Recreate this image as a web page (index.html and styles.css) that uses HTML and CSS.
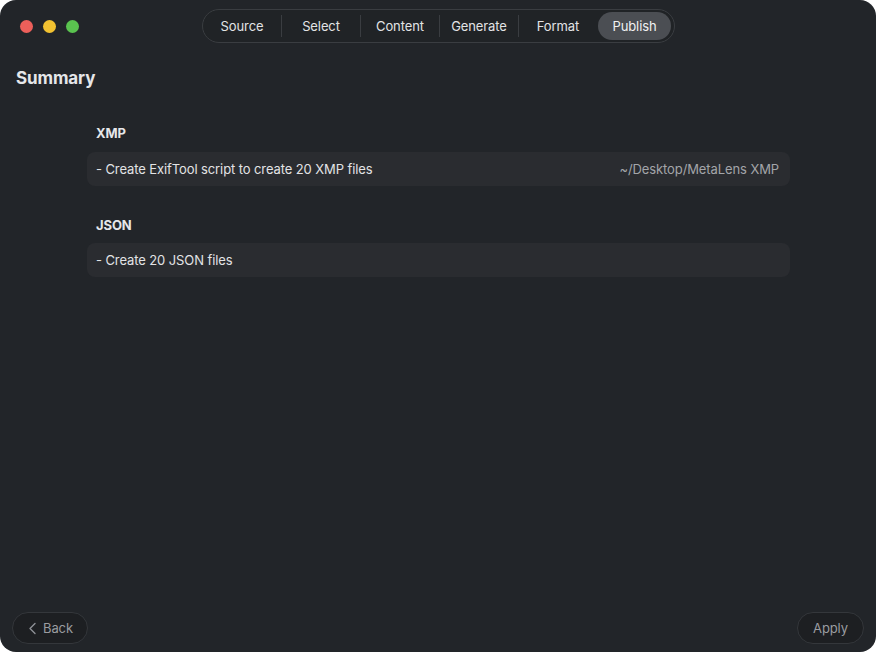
FILE: index.html
```html
<!DOCTYPE html>
<html>
<head>
<meta charset="utf-8">
<link rel="stylesheet" href="styles.css">
</head>
<body>
<div class="window">
  <header class="titlebar">
    <div class="lights">
      <span class="light red"></span>
      <span class="light yellow"></span>
      <span class="light green"></span>
    </div>
    <nav class="segments">
      <span class="seg">Source</span>
      <span class="div"></span>
      <span class="seg">Select</span>
      <span class="div"></span>
      <span class="seg">Content</span>
      <span class="div"></span>
      <span class="seg">Generate</span>
      <span class="div"></span>
      <span class="seg">Format</span>
      <span class="seg active">Publish</span>
    </nav>
  </header>
  <main class="content">
    <h1 class="title">Summary</h1>
    <section class="group">
      <h2 class="group-title">XMP</h2>
      <div class="row"><span>- Create ExifTool script to create 20 XMP files</span><span class="path">~/Desktop/MetaLens XMP</span></div>
    </section>
    <section class="group">
      <h2 class="group-title">JSON</h2>
      <div class="row"><span>- Create 20 JSON files</span></div>
    </section>
  </main>
  <footer class="footer">
    <button class="btn back"><svg width="9" height="13" viewBox="0 0 9 13"><path d="M7 1.5 L2 6.5 L7 11.5" fill="none" stroke="#8e9196" stroke-width="1.4" stroke-linecap="round" stroke-linejoin="round"/></svg>Back</button>
    <button class="btn apply">Apply</button>
  </footer>
</div>
</body>
</html>
```
FILE: styles.css
```css
html, body {
  margin: 0;
  padding: 0;
  background: #ffffff;
}
body {
  width: 876px;
  height: 652px;
  font-family: Inter, "Liberation Sans", sans-serif;
  -webkit-font-smoothing: antialiased;
  letter-spacing: -0.1px;
}
.window {
  width: 876px;
  height: 652px;
  box-sizing: border-box;
  background: #222529;
  border-radius: 16px;
  display: flex;
  flex-direction: column;
  overflow: hidden;
  color: #e4e5e7;
}
.titlebar {
  height: 52px;
  flex: none;
  position: relative;
  display: flex;
  align-items: flex-start;
}
.lights {
  display: flex;
  gap: 10px;
  padding: 20px 0 0 20px;
}
.light {
  width: 13px;
  height: 13px;
  border-radius: 50%;
  display: block;
}
.red { background: #ec5f5a; }
.yellow { background: #f2c231; }
.green { background: #5ac34f; }
.segments {
  position: absolute;
  left: 202px;
  top: 9px;
  width: 473px;
  height: 34px;
  box-sizing: border-box;
  border: 1px solid #3a3d41;
  border-radius: 17px;
  background: #202326;
  display: flex;
  align-items: center;
  padding: 0 3px 0 0;
}
.seg {
  flex: none;
  width: 78px;
  text-align: center;
  font-size: 13px;
  color: #e2e3e5;
  line-height: 28px;
}
.div {
  width: 1px;
  height: 22px;
  background: #3a3d41;
  flex: none;
}
.seg.active {
  width: 73px;
  margin-left: 1px;
  background: #4b4e53;
  border-radius: 14px;
  color: #f0f1f2;
}
.content {
  flex: 1;
  padding: 0 0 0 16px;
}
.title {
  margin: 16px 0 0 0;
  font-size: 17px;
  font-weight: 700;
  color: #e6e7e9;
  line-height: 20px;
}
.group {
  margin-left: 71px;
  width: 703px;
}
.group-title {
  margin: 0;
  font-size: 13px;
  font-weight: 700;
  color: #e6e7e9;
  line-height: 16px;
  padding-left: 9px;
}
.group:first-of-type .group-title { margin-top: 37px; }
.group + .group .group-title { margin-top: 31px; }
.group + .group .row { margin-top: 10px; }
.row {
  margin-top: 11px;
  height: 34px;
  border-radius: 8px;
  background: #2a2c30;
  display: flex;
  align-items: center;
  justify-content: space-between;
  padding: 0 11px 0 9px;
  font-size: 13px;
  color: #e2e3e5;
}
.path {
  color: #a3a5a9;
}
.footer {
  flex: none;
  height: 40px;
  box-sizing: border-box;
  padding: 0 12px 8px 12px;
  display: flex;
  justify-content: space-between;
  align-items: flex-start;
}
.btn {
  height: 32px;
  box-sizing: border-box;
  border: 1px solid #34373b;
  background: #1d1f22;
  border-radius: 16px;
  color: #9a9ca0;
  font-family: inherit;
  letter-spacing: inherit;
  font-size: 13px;
  display: flex;
  align-items: center;
  gap: 6px;
  padding: 0 14px;
}
.back { width: 76px; padding-left: 15px; }
.apply { width: 67px; justify-content: center; }
```
